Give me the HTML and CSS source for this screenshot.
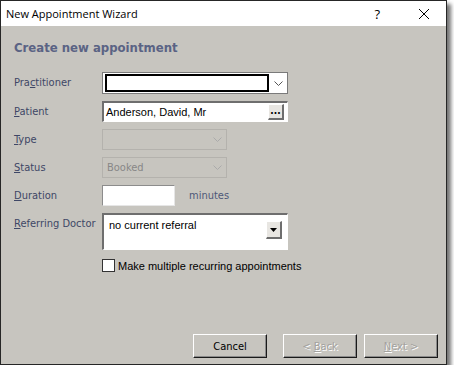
FILE: index.html
```html
<!DOCTYPE html>
<html lang="en">
<head>
    <meta charset="UTF-8">
    <title>New Appointment Wizard</title>
    <link rel="stylesheet" href="styles.css">
</head>
<body>
    <div class="window">
        <div class="titlebar">
            <span class="title">New Appointment Wizard</span>
            <span class="help">?</span>
            <span class="close">
                <svg width="12" height="12" viewBox="0 0 12 12"><path d="M1 1 L11 11 M11 1 L1 11" stroke="#000" stroke-width="1"/></svg>
            </span>
        </div>

        <div class="content">
            <h1 class="heading">Create new appointment</h1>

            <div class="form">
                <label class="label">Pra<u>c</u>titioner</label>
                <div class="combo wide">
                    <div class="combo-focus"></div>
                    <span class="chevron">
                        <svg width="9" height="5" viewBox="0 0 9 5"><path d="M0.5 0.5 L4.5 4.5 L8.5 0.5" fill="none" stroke="#555" stroke-width="1"/></svg>
                    </span>
                </div>

                <label class="label"><u>P</u>atient</label>
                <div class="sunken wide patient">
                    <span class="value">Anderson, David, Mr</span>
                    <span class="mini-btn dots">...</span>
                </div>

                <label class="label"><u>T</u>ype</label>
                <div class="combo narrow disabled">
                    <span class="value"></span>
                    <span class="chevron">
                        <svg width="9" height="5" viewBox="0 0 9 5"><path d="M0.5 0.5 L4.5 4.5 L8.5 0.5" fill="none" stroke="#aaa" stroke-width="1"/></svg>
                    </span>
                </div>

                <label class="label"><u>S</u>tatus</label>
                <div class="combo narrow disabled">
                    <span class="value">Booked</span>
                    <span class="chevron">
                        <svg width="9" height="5" viewBox="0 0 9 5"><path d="M0.5 0.5 L4.5 4.5 L8.5 0.5" fill="none" stroke="#aaa" stroke-width="1"/></svg>
                    </span>
                </div>

                <label class="label"><u>D</u>uration</label>
                <div class="duration-row">
                    <div class="textbox"></div>
                    <span class="unit">minutes</span>
                </div>

                <label class="label"><u>R</u>eferring Doctor</label>
                <div class="sunken wide referral">
                    <span class="value">no current referral</span>
                    <span class="mini-btn arrow">
                        <svg width="7" height="4" viewBox="0 0 7 4"><path d="M0 0 H7 L3.5 4 Z" fill="#000"/></svg>
                    </span>
                </div>

                <span></span>
                <div class="check-row">
                    <span class="checkbox"></span>
                    <span>Make multiple recurring appointments</span>
                </div>
            </div>

            <div class="buttons">
                <button class="btn">Cancel</button>
                <button class="btn off back">&lt; <u>B</u>ack</button>
                <button class="btn off"><u>N</u>ext &gt;</button>
            </div>
        </div>
    </div>
</body>
</html>
```

FILE: styles.css
```css
body {
    margin: 0;
    padding: 0;
    background: #fff;
    font-family: 'DejaVu Sans Condensed', 'DejaVu Sans', sans-serif;
    font-size: 11px;
}
.window {
    width: 445px;
    height: 363px;
    border: 1px solid #262626;
    background: #c7c5bf;
    box-shadow: 4px 4px 4px rgba(0, 0, 0, 0.55);
    display: flex;
    flex-direction: column;
}
.titlebar {
    height: 25px;
    background: #fff;
    display: flex;
    align-items: center;
    font-family: 'Open Sans', sans-serif;
    font-size: 11px;
    color: #000;
}
.title {
    padding-left: 5px;
    flex: 1;
}
.help {
    margin-right: 38px;
    font-size: 13px;
}
.close {
    margin-right: 16px;
    display: flex;
}
.content {
    flex: 1;
    display: flex;
    flex-direction: column;
    padding: 0 8px 6px 13px;
}
.heading {
    margin: 14px 0 17px 0;
    font-size: 13px;
    font-weight: bold;
    color: #5a6384;
}
.form {
    display: grid;
    grid-template-columns: 88px auto;
    row-gap: 7px;
    justify-items: start;
}
.label {
    padding-top: 4px;
    color: #3e4766;
}
.wide {
    width: 186px;
}
.narrow {
    width: 125px;
}
.combo {
    height: 22px;
    box-sizing: border-box;
    border: 1px solid #7a7a7a;
    background: #fff;
    display: flex;
    align-items: center;
}
.combo-focus {
    flex: 1;
    height: 14px;
    margin-left: 2px;
    border: 2px solid #000;
}
.chevron {
    width: 18px;
    display: flex;
    justify-content: center;
}
.combo.disabled {
    height: 21px;
    background: #c7c5bf;
    border-color: #b4b2ad;
}
.combo.disabled .value {
    flex: 1;
    padding-left: 4px;
    color: #878787;
    font-size: 11px;
}
.sunken {
    box-sizing: border-box;
    background: #fff;
    border-top: 2px solid #6e6e6e;
    border-left: 2px solid #6e6e6e;
    border-right: 1px solid #fff;
    border-bottom: 1px solid #fff;
    display: flex;
}
.patient {
    height: 21px;
    align-items: center;
}
.patient .value {
    flex: 1;
    padding-left: 2px;
    font-family: 'Liberation Sans', sans-serif;
    font-size: 11px;
    color: #000;
}
.mini-btn {
    box-sizing: border-box;
    width: 16px;
    height: 16px;
    margin-right: 3px;
    background: #e8e6e2;
    border-top: 1px solid #fff;
    border-left: 1px solid #fff;
    border-right: 2px solid #6e6e6e;
    border-bottom: 2px solid #6e6e6e;
    display: flex;
    align-items: center;
    justify-content: center;
}
.dots {
    font-weight: bold;
    font-size: 10px;
    line-height: 1;
    padding-bottom: 1px;
}
.referral {
    height: 37px;
    align-items: flex-start;
}
.referral .value {
    flex: 1;
    padding: 4px 0 0 5px;
    font-family: 'Liberation Sans', sans-serif;
    font-size: 11px;
    color: #000;
}
.referral .arrow {
    height: 18px;
    margin-top: 6px;
    margin-right: 5px;
}
.duration-row {
    display: flex;
    align-items: center;
}
.textbox {
    width: 73px;
    height: 21px;
    box-sizing: border-box;
    background: #fff;
    border: 1px solid #8c8c8c;
    border-right-color: #e6e6e6;
    border-bottom-color: #e6e6e6;
}
.unit {
    margin-left: 14px;
    color: #4e5878;
}
.check-row {
    margin-top: 2px;
    display: flex;
    align-items: center;
    font-family: 'Liberation Sans', sans-serif;
    color: #000;
}
.checkbox {
    width: 11px;
    height: 11px;
    margin-right: 3px;
    background: #fff;
    border: 1px solid #333;
}
.buttons {
    margin-top: auto;
    display: flex;
    justify-content: flex-end;
}
.btn {
    width: 74px;
    height: 24px;
    margin-left: 7px;
    padding: 0;
    background: #c7c5bf;
    border-top: 1px solid #fff;
    border-left: 1px solid #fff;
    border-right: 1px solid #1a1a1a;
    border-bottom: 1px solid #1a1a1a;
    box-shadow: inset -1px -1px 0 #8a8a8a;
    font-family: 'DejaVu Sans Condensed', 'DejaVu Sans', sans-serif;
    font-size: 11px;
    color: #000;
}
.btn.back {
    margin-left: 16px;
}
.btn.off {
    color: #a3a29e;
    text-shadow: 1px 1px 0 #fff;
}
```
